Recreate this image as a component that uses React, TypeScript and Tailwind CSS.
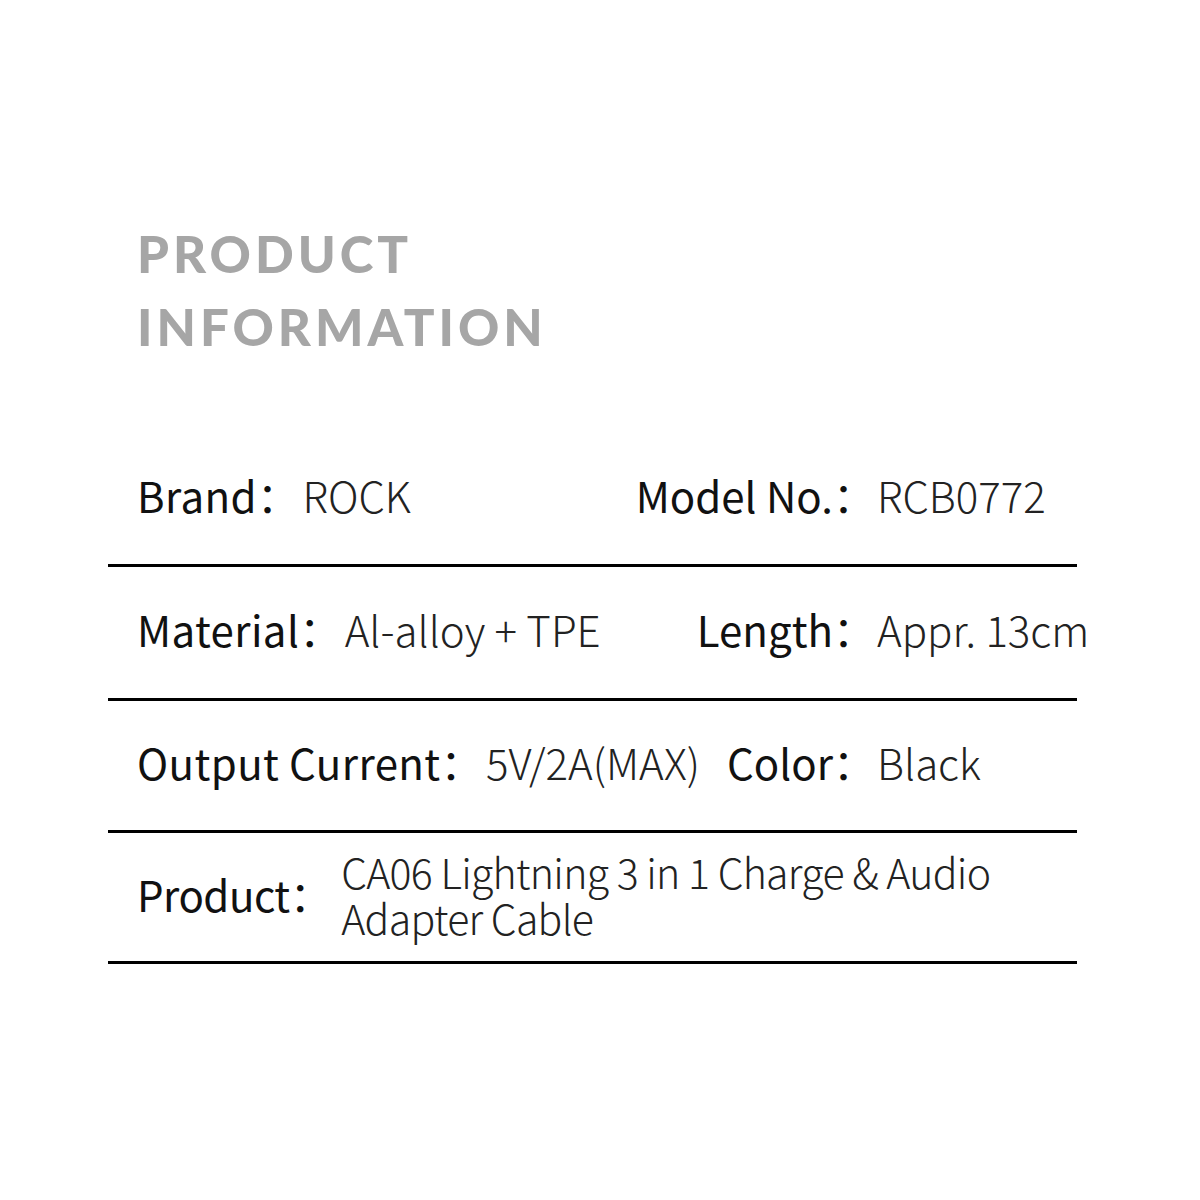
const sans = "font-['Noto_Sans_CJK_SC','Noto_Sans',sans-serif]";

function Row({ children, h }: { children: React.ReactNode; h: string }) {
  return (
    <div className={`flex items-center border-b-[3px] border-black pl-[29px] pb-[7px] whitespace-nowrap ${h}`}>
      {children}
    </div>
  );
}

function Left({ label, value }: { label: string; value: string }) {
  return (
    <div className="w-[440px] shrink-0 flex items-baseline">
      <span className="shrink-0 text-[#111] tracking-[0.4px]">{label}：</span>
      <span className="shrink-0 font-extralight text-[#222] ml-[3px]">{value}</span>
    </div>
  );
}

function Right({ label, value }: { label: string; value: string }) {
  return (
    <div className="w-[500px] shrink-0 flex items-baseline">
      <span className="w-[298px] shrink-0 text-right text-[#111]">{label}：</span>
      <span className="shrink-0 font-extralight text-[#222] ml-[2px]">{value}</span>
    </div>
  );
}

export default function App() {
  return (
    <div className="w-[1200px] h-[1200px] bg-white">
      <div className="ml-[108px] w-[969px] pt-[217px]">
        <h1 className="pl-[29px] font-['Lato',sans-serif] font-black text-[51px] leading-[73px] tracking-[4px] text-[#a6a6a6]">
          PRODUCT
          <br />
          INFORMATION
        </h1>
        <div className={`mt-[70px] text-[42px] leading-[48px] ${sans}`}>
          <Row h="h-[134px]">
            <Left label="Brand" value="ROCK" />
            <Right label="Model No." value="RCB0772" />
          </Row>
          <Row h="h-[134px]">
            <Left label="Material" value="Al-alloy + TPE" />
            <Right label="Length" value="Appr. 13cm" />
          </Row>
          <Row h="h-[132px]">
            <Left label="Output Current" value="5V/2A(MAX)" />
            <Right label="Color" value="Black" />
          </Row>
          <Row h="h-[131px]">
            <span className="text-[#111] tracking-[-0.5px]">Product：</span>
            <span className="font-extralight text-[#222] text-[41px] leading-[46px] tracking-[-0.7px] ml-[10px]">
              CA06 Lightning 3 in 1 Charge &amp; Audio
              <br />
              Adapter Cable
            </span>
          </Row>
        </div>
      </div>
    </div>
  );
}
